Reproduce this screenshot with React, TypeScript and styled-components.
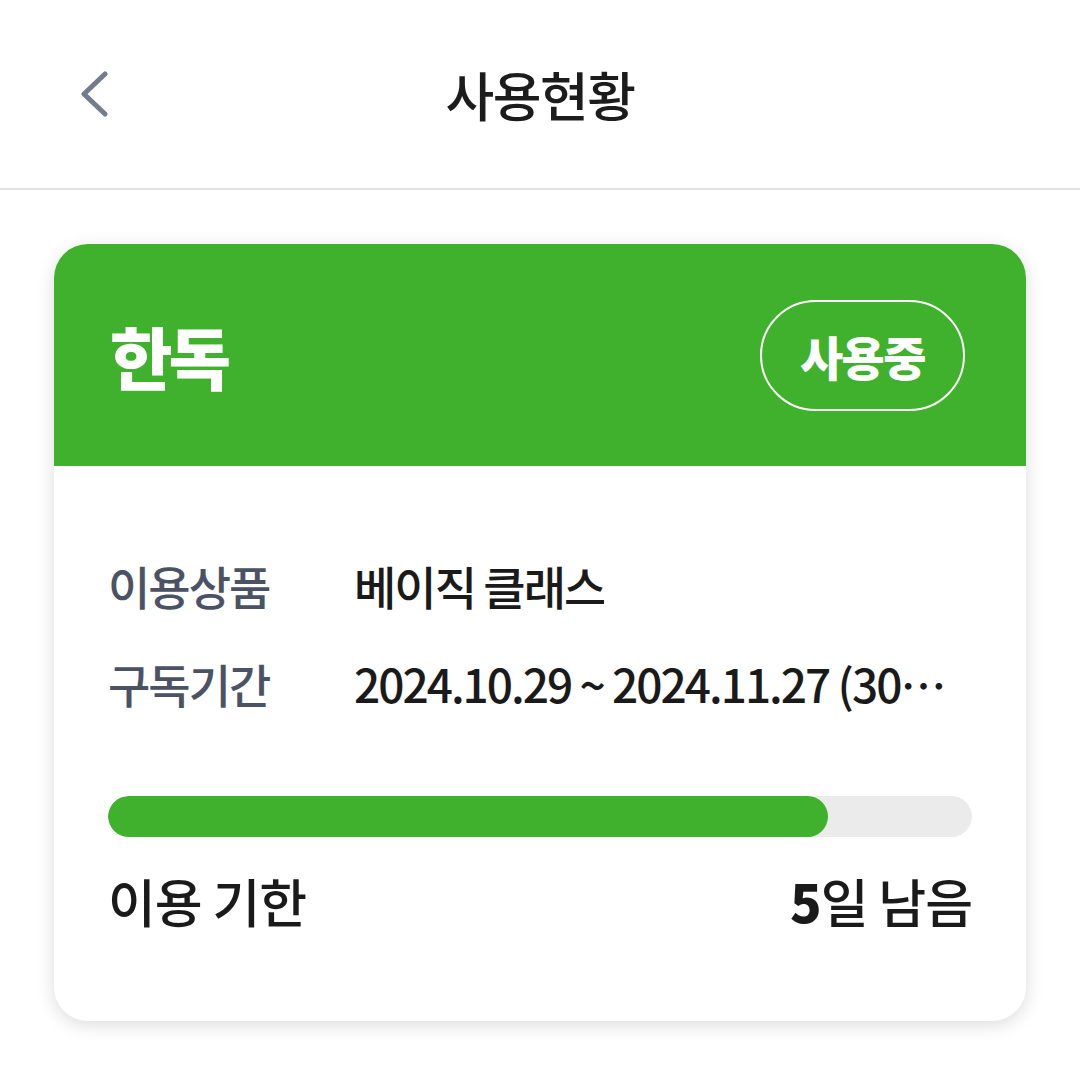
import { FC } from 'react';
import styled, { createGlobalStyle } from 'styled-components';

const Global = createGlobalStyle`
  body {
    margin: 0;
    background: #fff;
    font-family: 'Noto Sans CJK KR', 'Noto Sans', sans-serif;
  }
`;

const GREEN = '#3fb12c';

const Header = styled.header`
  height: 188px;
  border-bottom: 2px solid #e2e2e2;
  display: grid;
  grid-template-columns: 120px 1fr 120px;
  align-items: center;
  .back {
    display: flex;
    align-items: center;
    padding-left: 79px;
  }
  .title {
    text-align: center;
    font-size: 53px;
    font-weight: 500;
    color: #1c1c1c;
    letter-spacing: -1.5px;
  }
`;

const Main = styled.main`
  padding: 54px 54px 40px;
`;

const Card = styled.section`
  border-radius: 34px;
  overflow: hidden;
  background: #fff;
  box-shadow: 0 4px 18px rgba(0, 0, 0, 0.14);
`;

const CardHead = styled.div`
  height: 222px;
  background: ${GREEN};
  display: flex;
  align-items: center;
  justify-content: space-between;
  padding: 0 61px 0 56px;
  .name {
    font-size: 68px;
    font-weight: 900;
    color: #fff;
    letter-spacing: -4px;
  }
`;

const Badge = styled.div`
  width: 205px;
  height: 111px;
  box-sizing: border-box;
  border: 2.5px solid #fff;
  border-radius: 56px;
  display: flex;
  align-items: center;
  justify-content: center;
  color: #fff;
  font-size: 47px;
  font-weight: 900;
  letter-spacing: -1.5px;
`;

const CardBody = styled.div`
  padding: 70px 54px 91px;
`;

const Row = styled.div`
  height: 98px;
  display: flex;
  align-items: center;
  font-size: 46px;
  letter-spacing: -2px;
  .label {
    flex: 0 0 246px;
    color: #4b5263;
    font-weight: 500;
  }
  .value {
    flex: 0 1 auto;
    max-width: 594px;
    color: #1a1a1a;
    font-weight: 500;
    white-space: nowrap;
    overflow: hidden;
    text-overflow: ellipsis;
  }
`;

const Track = styled.div`
  margin-top: 64px;
  height: 41px;
  border-radius: 21px;
  background: #ebebeb;
  overflow: hidden;
`;

const Fill = styled.div`
  height: 100%;
  border-radius: 21px;
  background: ${GREEN};
`;

const Footer = styled.div`
  margin-top: 33px;
  height: 60px;
  display: flex;
  align-items: center;
  justify-content: space-between;
  font-size: 52px;
  font-weight: 500;
  color: #1a1a1a;
  letter-spacing: -1px;
  b {
    font-weight: 900;
  }
`;

const BackIcon: FC = () => (
  <svg width="30" height="46" viewBox="0 0 30 46" fill="none">
    <path d="M26 3 L5 23 L26 43" stroke="#737b8c" strokeWidth="5" strokeLinecap="round" strokeLinejoin="round" />
  </svg>
);

const App: FC = () => {
  const total = 30;
  const left = 5;
  const used = total - left;
  return (
    <>
      <Global />
      <Header>
        <div className="back"><BackIcon /></div>
        <div className="title">사용현황</div>
        <div />
      </Header>
      <Main>
        <Card>
          <CardHead>
            <div className="name">한독</div>
            <Badge>사용중</Badge>
          </CardHead>
          <CardBody>
            <Row>
              <span className="label">이용상품</span>
              <span className="value">베이직 클래스</span>
            </Row>
            <Row>
              <span className="label">구독기간</span>
              <span className="value">2024.10.29 ~ 2024.11.27 (30일)</span>
            </Row>
            <Track>
              <Fill style={{ width: `${(used / total) * 100}%` }} />
            </Track>
            <Footer>
              <span>이용 기한</span>
              <span><b>{left}</b>일 남음</span>
            </Footer>
          </CardBody>
        </Card>
      </Main>
    </>
  );
};

export default App;
